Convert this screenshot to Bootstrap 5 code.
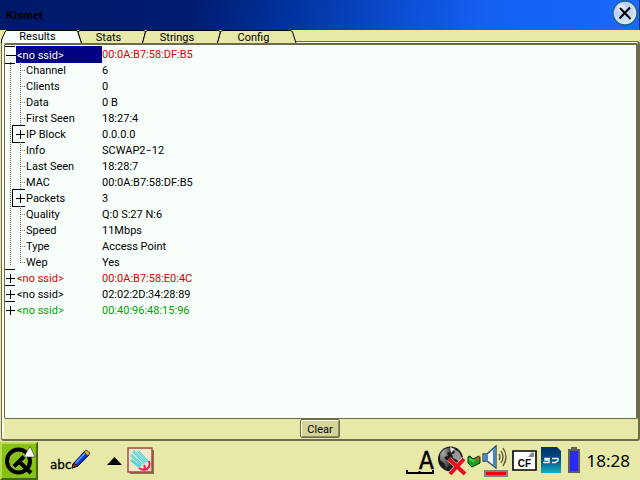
<!DOCTYPE html>
<html lang="en">
<head>
<meta charset="utf-8">
<meta name="viewport" content="width=device-width, initial-scale=1">
<title>Kismet</title>
<link rel="stylesheet" href="https://cdn.jsdelivr.net/npm/bootstrap@5.3.0/dist/css/bootstrap.min.css">
<style>
body{background:#e8e8a8;color:#000;font:11px/16px Roboto,"Liberation Sans",sans-serif}
svg{display:block;overflow:visible}
.titlebar{height:30px;background:linear-gradient(97deg,#001a68 0,#001c70 30%,#0034a0 46%,#0c4cd0 62%,#1660f4 76%,#1a68ff 100%);border-right:1px solid #0a2a70;padding:0 1px 0 6px}
.titlebar h1{font:700 11px/16px "Liberation Sans",Arial,sans-serif}
.bare{border:0;padding:0;background:none;color:#000}
.tabs{height:11px;padding-left:1px;position:relative;z-index:1}
.tab{position:relative;height:13px;padding:0 7px 0 0;line-height:16px;text-align:center}
.tab svg{position:absolute;left:0;top:0}
.tab path{fill:#e8e8a8;stroke:#000;stroke-width:1}
.tab span{position:relative}
.tab.active{line-height:13px}
.tab.active path{fill:#f8fffb}
.w80{width:80px}.w62{width:62px}.w75{width:75px}.w78{width:78px}
.pane{border:1px solid #6c6c48;border-width:1px 2px 2px 1px;border-radius:3px;box-shadow:inset 2px 1px #fffff4;padding:1px 0 0 2px;margin:0 0 0 1px}
.listbox{background:#f8fffb;border:2px solid #6c6c48;border-width:2px 2px 1px 1px;border-radius:2px;padding-top:2px}
.tree{border-collapse:collapse;width:100%}
.tree td{height:16px;padding:0;line-height:16px;white-space:nowrap}
.tree td:first-child{width:97px}
.gutter{width:11px;height:16px;margin-top:-1px;flex:none;shape-rendering:crispEdges;stroke:#000;fill:none}
.deep{width:21px}
.dots{stroke:#6c6c48;stroke-dasharray:1 1}
.sel{background:#000080;color:#fff;margin-top:-2px;padding:2px 0 0 1px;height:17px;line-height:16px}
.lbl{padding-left:1px}
.red{color:#d80000}.green{color:#00a000}
.clearbtn{width:40px;height:19px;padding:1px 0 0;line-height:15px;background:#d4d498;border:1px solid #6c6c48;border-radius:2px;box-shadow:inset 1px 1px #ffffe8,inset -1px -1px #8c8c64;margin:0 2px 1px 0}
.taskbar{height:39px}
.qbtn{width:38px}
.clock{font:17px/24px "Noto Sans","Open Sans",sans-serif;margin-left:6px;padding-right:10px}
</style>
</head>
<body>
<svg width="0" height="0" class="position-absolute" aria-hidden="true">
<defs>
<g id="leaf"><path class="dots" d="M5.5 0V16M15.5 0V16M17 8.5H20"/></g>
<g id="last"><path class="dots" d="M5.5 0V12M15.5 0V9M15 8.5H20"/></g>
<g id="branch"><path class="dots" d="M5.5 0V16"/><path d="M20 -.5H7.5V16.5H20M11 8.5H20M15.5 4V13"/></g>
<g id="closed"><path d="M0 -.5H10M0 15.5H10M1 8.5H10M5.5 4V13"/></g>
</defs>
</svg>
<div class="vh-100 d-flex flex-column">
<header class="titlebar d-flex align-items-center justify-content-between">
<h1 class="m-0">Kismet</h1>
<button class="bare align-self-start" aria-label="Close"><svg width="26" height="27" viewBox="0 0 26 27"><defs><radialGradient id="glass" cx=".35" cy=".3" r=".8"><stop offset="0" stop-color="#fff"/><stop offset=".3" stop-color="#b8cdf4"/><stop offset=".7" stop-color="#cfe0f4"/><stop offset="1" stop-color="#e8f8ff"/></radialGradient></defs><circle cx="13" cy="13" r="12" fill="url(#glass)" stroke="#1a6480" stroke-width="1.4"/><path d="M8 8L18.500 19M18 7.500L7.500 18.500" stroke="#000" stroke-width="2"/></svg></button>
</header>
<nav class="tabs d-flex" role="tablist">
<button class="tab bare active w80" role="tab" aria-selected="true"><svg width="80" height="13"><path d="M.5 13V10L4 2Q4.500 .500 6 .5H75Q76.500 .500 77 2L80.500 13"/></svg><span>Results</span></button>
<button class="tab bare w62" role="tab"><svg width="62" height="13"><path d="M.5 13L-3 2L-1 .5H62Q64 .500 64.500 2L61.500 13"/></svg><span>Stats</span></button>
<button class="tab bare w75" role="tab"><svg width="75" height="13"><path d="M-.5 13L2.500 2Q3 .500 5 .5H75Q77 .500 77.500 2L74.500 13"/></svg><span>Strings</span></button>
<button class="tab bare w78" role="tab"><svg width="78" height="13"><path d="M-.5 13L2.500 2Q3 .500 5 .5H72Q74 .500 74.500 2L78 13"/></svg><span>Config</span></button>
</nav>
<main class="pane flex-grow-1 d-flex flex-column">
<div class="listbox flex-grow-1">
<table class="tree">
<tr><td><div class="d-flex"><svg class="gutter"><path d="M0 -.5H10M0 16.500H10M1 8.500H11"/></svg><div class="sel flex-grow-1">&lt;no ssid&gt;</div></div></td><td class="red">00:0A:B7:58:DF:B5</td></tr>
<tr><td><div class="d-flex"><svg class="gutter deep"><use href="#leaf"/></svg>Channel</div></td><td>6</td></tr>
<tr><td><div class="d-flex"><svg class="gutter deep"><use href="#leaf"/></svg>Clients</div></td><td>0</td></tr>
<tr><td><div class="d-flex"><svg class="gutter deep"><use href="#leaf"/></svg>Data</div></td><td>0 B</td></tr>
<tr><td><div class="d-flex"><svg class="gutter deep"><use href="#leaf"/></svg>First Seen</div></td><td>18:27:4</td></tr>
<tr><td><div class="d-flex"><svg class="gutter deep"><use href="#branch"/></svg>IP Block</div></td><td>0.0.0.0</td></tr>
<tr><td><div class="d-flex"><svg class="gutter deep"><use href="#leaf"/></svg>Info</div></td><td>SCWAP2−12</td></tr>
<tr><td><div class="d-flex"><svg class="gutter deep"><use href="#leaf"/></svg>Last Seen</div></td><td>18:28:7</td></tr>
<tr><td><div class="d-flex"><svg class="gutter deep"><use href="#leaf"/></svg>MAC</div></td><td>00:0A:B7:58:DF:B5</td></tr>
<tr><td><div class="d-flex"><svg class="gutter deep"><use href="#branch"/></svg>Packets</div></td><td>3</td></tr>
<tr><td><div class="d-flex"><svg class="gutter deep"><use href="#leaf"/></svg>Quality</div></td><td>Q:0 S:27 N:6</td></tr>
<tr><td><div class="d-flex"><svg class="gutter deep"><use href="#leaf"/></svg>Speed</div></td><td>11Mbps</td></tr>
<tr><td><div class="d-flex"><svg class="gutter deep"><use href="#leaf"/></svg>Type</div></td><td>Access Point</td></tr>
<tr><td><div class="d-flex"><svg class="gutter deep"><use href="#last"/></svg>Wep</div></td><td>Yes</td></tr>
<tr class="red"><td><div class="d-flex"><svg class="gutter"><use href="#closed"/></svg><span class="lbl">&lt;no ssid&gt;</span></div></td><td>00:0A:B7:58:E0:4C</td></tr>
<tr><td><div class="d-flex"><svg class="gutter"><use href="#closed"/></svg><span class="lbl">&lt;no ssid&gt;</span></div></td><td>02:02:2D:34:28:89</td></tr>
<tr class="green"><td><div class="d-flex"><svg class="gutter"><path d="M0 -.5H10M1 8.500H10M5.500 4V13"/></svg><span class="lbl">&lt;no ssid&gt;</span></div></td><td>00:40:96:48:15:96</td></tr>
</table>
</div>
<button class="clearbtn align-self-center">Clear</button>
</main>
<footer class="taskbar d-flex align-items-center">
<button class="bare qbtn" aria-label="Menu"><svg width="38" height="38" viewBox="0 0 38 38"><path fill="#88c018" d="M0 0H38V38H0z"/><path fill="#b8dc50" d="M0 0H38L35 2H2V38H0z"/><path fill="#406808" d="M38 0V38H0L2 36H36V2z"/><circle cx="18.500" cy="19" r="11.500" fill="none" stroke="#000" stroke-width="4"/><path d="M14 24.500L24 14.500M19 19.500L31 31" stroke="#000" stroke-width="4" fill="none"/><path d="M30 4.500L35 15H24z" fill="#fff" stroke="#444" stroke-width=".7"/></svg></button>
<button class="bare ms-2 ps-1" aria-label="Keyboard"><svg width="41" height="28" viewBox="0 0 41 28"><text x="0" y="22" font-family="DejaVu Sans" font-size="12" stroke="#000" stroke-width=".3">abc</text><path d="M22 21L23 17L34 5L39 8L28 19z" fill="#1038d0" stroke="#001050"/><path d="M25 17L35 6" stroke="#60a0ff" stroke-width="1.500"/><path d="M22 21L23.500 16L28 19z" fill="#704018" stroke="#201000"/><path d="M34 5L36 3L40 6L38 9z" fill="#d8b040" stroke="#504010"/></svg></button>
<button class="bare ms-3" aria-label="Show more"><svg width="15" height="8" viewBox="0 0 15 8"><path d="M7.500 0L15 8H0z"/></svg></button>
<button class="bare ms-1" aria-label="Input method"><svg width="28" height="27" viewBox="-1 0 28 27"><path d="M3 3H27V27H3z" fill="#807858"/><path d="M1 1H25V25H1z" fill="#f0e8c8" stroke="#a04838" stroke-width="1.400"/><path d="M6 4L18 16M4 8L15 18M11 4L21 15M4 13L13 20" stroke="#50d0d8" stroke-width="2.600"/><path d="M6 4L18 16M4 8L15 18M11 4L21 15" stroke="#a8f0e8" stroke-width=".8"/><path d="M12 21Q16 24 20 22Q24 19 22 14M17 18Q19 22 16 23" fill="none" stroke="#f01858" stroke-width="2"/></svg></button>
<div class="ms-auto d-flex align-items-center">
<svg width="29" height="28" viewBox="0 0 29 28"><text x="14" y="22" font-family="DejaVu Sans Condensed" font-size="24" stroke="#000" stroke-width=".5">A</text><path d="M2 23V26H28V23M14.500 24V26" fill="none" stroke="#000" stroke-width="2"/></svg>
<svg class="ms-1" width="27" height="31" viewBox="0 0 27 31"><defs><radialGradient id="orb" cx=".3" cy=".25" r=".8"><stop offset="0" stop-color="#aaa"/><stop offset="1" stop-color="#333"/></radialGradient></defs><circle cx="12.500" cy="14" r="12.500" fill="#1c1c1c"/><path d="M2 9Q6 2 12 3L13 6L9 8L10 11L6 12L8 15L12 16L13 20L8 24L6 18L2 15z" fill="url(#orb)"/><path d="M16 4L21 7L24 13L22 19L19 15L15 13L14 9L17 8z" fill="#999"/><path d="M12 2L17 4L13 8z" fill="#e0e0e0"/><path d="M11 14L27 29M26 14L12 29" stroke="#f8d0d0" stroke-width="5"/><path d="M11 14L27 29M26 14L12 29" stroke="#e81018" stroke-width="3.800"/></svg>
<svg class="ms-1" width="13" height="14" viewBox="1 0 13 14"><path d="M0 3L2 2L5 5L11 2L12 3V9L4 13L0 9z" fill="#18a020" stroke="#003800"/><path d="M1 4L5 6L11 4L11 5L5 8L1 6z" fill="#40e040"/><path d="M7 7L12 2" stroke="#e03018" stroke-width="1.500"/></svg>
<svg width="27" height="32" viewBox="1 1 27 32"><path d="M2 10H6L15 2V24L6 17H2z" fill="#f4faff" stroke="#204870" stroke-width="1.300"/><path d="M3 11H7V16H3zM12 6L14.500 3V23L12 21z" fill="#4088c8"/><path d="M18 10Q20 13 18 16M20 7Q24 13 20 19M22 4Q28 13 22 22" fill="none" stroke="#505030" stroke-width="1.300"/><path d="M4 27H26V32H4z" fill="#f00000" stroke="#808080" stroke-width="2"/></svg>
<svg class="ms-1" width="25" height="21" viewBox="1 0 25 21"><path d="M1 1H24V20H1z" fill="#fff" stroke="#000" stroke-width="1.600"/><path d="M16 7L20 2L22 3V7z" fill="#888"/><text x="12.500" y="17" text-anchor="middle" font-family="Liberation Sans" font-weight="700" font-size="10">CF</text></svg>
<svg class="ms-1" width="21" height="27" viewBox="1 0 21 27"><defs><linearGradient id="card-sd" x2="0" y2="1"><stop offset="0" stop-color="#003068"/><stop offset=".5" stop-color="#005080"/><stop offset="1" stop-color="#18b0c0"/></linearGradient></defs><path d="M0 0H16L20 4V26H0z" fill="url(#card-sd)"/><path d="M9 11.500H4V13H8V15.500H2M11 15.500H14Q18 14 17 11.500H11" fill="none" stroke="#e8f8ff" stroke-width="1.400"/></svg>
<svg class="ms-1" width="14" height="27" viewBox="0 0 14 27"><path d="M4 0H10V2H13V26H1V2H4z" fill="#606058"/><path d="M3 4H11V24H3z" fill="#2828ff"/></svg>
<span class="clock">18:28</span>
</div>
</footer>
</div>
</body>
</html>
